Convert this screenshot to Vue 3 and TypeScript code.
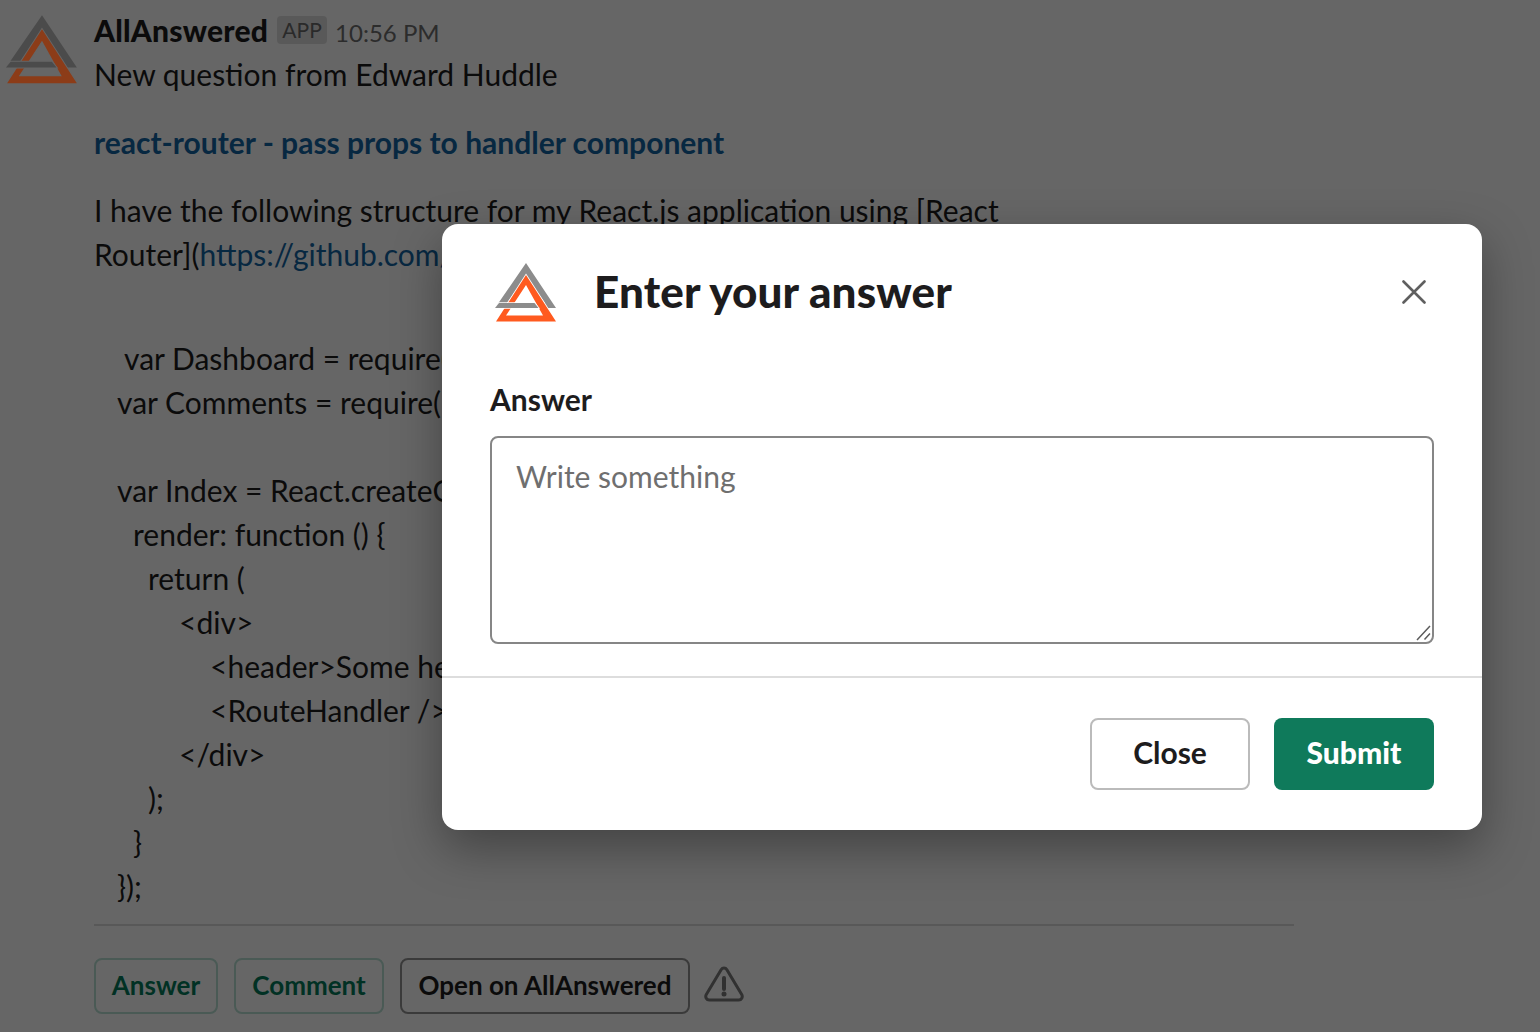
<script setup lang="ts">
interface CodeLine {
  text: string
  indent: number
}

const codeLines: CodeLine[] = [
  { text: 'var Dashboard = require(', indent: 30 },
  { text: 'var Comments = require(', indent: 23 },
  { text: '', indent: 0 },
  { text: 'var Index = React.createC', indent: 23 },
  { text: 'render: function () {', indent: 39 },
  { text: 'return (', indent: 54 },
  { text: '<div>', indent: 85 },
  { text: '<header>Some he', indent: 116 },
  { text: '<RouteHandler />', indent: 116 },
  { text: '</div>', indent: 85 },
  { text: ');', indent: 54 },
  { text: '}', indent: 39 },
  { text: '});', indent: 23 },
]
</script>

<template>
  <div class="page">
    <div class="message">
      <svg class="avatar" viewBox="0 0 62 60" aria-hidden="true">
        <use href="#aa-logo" />
      </svg>
      <div class="content">
        <div class="meta">
          <span class="name">AllAnswered</span>
          <span class="badge">APP</span>
          <span class="time">10:56 PM</span>
        </div>
        <div class="line">New question from Edward Huddle</div>
        <a class="line title-link">react-router - pass props to handler component</a>
        <div class="line para-first">I have the following structure for my React.js application using [React</div>
        <div class="line">Router](<a class="link">https://github.com/</a></div>
        <div class="code">
          <div
            v-for="(row, i) in codeLines"
            :key="i"
            class="line code-line"
            :style="{ paddingLeft: row.indent + 'px' }"
          >{{ row.text }}</div>
        </div>
        <div class="rule"></div>
        <div class="actions">
          <button class="act act-green act-answer">Answer</button>
          <button class="act act-green act-comment">Comment</button>
          <button class="act act-open">Open on AllAnswered</button>
          <svg class="warn" viewBox="0 0 40 36" aria-hidden="true">
            <path d="M20 2c-1.2 0-2.2.6-2.9 1.7L2.3 28.6C.9 31 2.500 34 5.300 34h29.400c2.800 0 4.400-3 3-5.400L22.900 3.700C22.200 2.600 21.200 2 20 2z" fill="none" stroke="#7a7a7a" stroke-width="3" stroke-linejoin="round" />
            <path d="M20 12v11" stroke="#7a7a7a" stroke-width="4" stroke-linecap="round" />
            <circle cx="20" cy="28" r="2.500" fill="#7a7a7a" />
          </svg>
        </div>
      </div>
    </div>

    <div class="overlay"></div>

    <div class="modal">
      <div class="modal-head">
        <svg class="modal-logo" viewBox="0 0 62 60" aria-hidden="true">
          <defs>
            <g id="aa-logo">
              <path class="logo-gray" fill-rule="evenodd" d="M31 1 61 46H0ZM31 14 12 41H50Z" />
              <path class="logo-orange" fill-rule="evenodd" stroke-width="1.6" paint-order="stroke" d="M31 13 61 59.5H1ZM31 23 11 53.500H48Z" />
              <path class="logo-gray logo-halo" stroke-width="1.6" paint-order="stroke" d="M4 41H39.500L43.500 46H0Z" />
            </g>
          </defs>
          <use href="#aa-logo" />
        </svg>
        <h2 class="modal-title">Enter your answer</h2>
        <svg class="close-x" viewBox="0 0 24 24" aria-hidden="true">
          <path d="M1.500 1.500 22.500 22.500M22.500 1.500 1.500 22.500" stroke="#5f5f5f" stroke-width="2.600" stroke-linecap="round" />
        </svg>
      </div>
      <div class="modal-body">
        <label class="field-label" for="answer">Answer</label>
        <div class="field-wrap">
          <textarea id="answer" class="field" placeholder="Write something"></textarea>
          <svg class="grip" viewBox="0 0 16 16" aria-hidden="true">
            <path d="M1 15 14 1M8.500 14.500 14 8.500" stroke="#5c5c5c" stroke-width="1.500" fill="none" />
          </svg>
        </div>
      </div>
      <div class="modal-foot">
        <button class="btn btn-close">Close</button>
        <button class="btn btn-submit">Submit</button>
      </div>
    </div>
  </div>
</template>

<style>
html,
body {
  margin: 0;
  background: #fff;
}
</style>

<style scoped>
.page {
  position: relative;
  height: 1032px;
  overflow: hidden;
  background: #fff;
  font-family: Lato, 'Liberation Sans', sans-serif;
  font-size: 30px;
  line-height: 44px;
  color: #1d1c1d;
}
.message {
  display: flex;
  gap: 16px;
  padding: 8px 0 0 6px;
}
.avatar {
  --aa-gray: #4b4b4b;
  --aa-orange: #8c3c18;
  --aa-halo: #666666;
  position: relative;
  z-index: 1;
  flex: none;
  width: 72px;
  height: 70px;
  margin-top: 6px;
}
.modal-logo {
  --aa-gray: #8c8c8c;
  --aa-orange: #ff5a1f;
  --aa-halo: #ffffff;
}
.logo-gray {
  fill: var(--aa-gray);
}
.logo-orange {
  fill: var(--aa-orange);
  stroke: var(--aa-halo);
}
.logo-halo {
  stroke: var(--aa-halo);
}
.content {
  width: 1200px;
}
.meta {
  display: flex;
  align-items: center;
  height: 44px;
}
.name {
  font-weight: 900;
  letter-spacing: 0.2px;
}
.badge {
  margin-left: 9px;
  width: 50px;
  height: 28px;
  border-radius: 4px;
  background: #dfdfdf;
  color: #6a6a6a;
  font-size: 21px;
  line-height: 28px;
  font-weight: 400;
  text-align: center;
}
.time {
  margin: 6px 0 0 8px;
  font-size: 24px;
  color: #6e6e6e;
}
.line {
  display: block;
  min-height: 44px;
}
.title-link {
  margin-top: 24px;
  font-weight: 700;
  color: #1264a3;
}
.para-first {
  margin-top: 24px;
}
.link {
  color: #1264a3;
}
.code {
  margin-top: 60px;
}
.code-line {
  white-space: pre;
}
.rule {
  height: 2px;
  margin-top: 16px;
  background: #ddd;
}
.actions {
  display: flex;
  align-items: center;
  gap: 16px;
  margin-top: 32px;
}
.act {
  height: 56px;
  padding: 0 0 2px;
  border-radius: 8px;
  background: #fff;
  font-family: inherit;
  font-size: 26px;
  font-weight: 700;
}
.act-green {
  border: 2px solid #b8e0d4;
  color: #047a5a;
}
.act-answer {
  width: 124px;
}
.act-comment {
  width: 150px;
}
.act-open {
  width: 290px;
  border: 2px solid #929292;
  color: #1d1c1d;
}
.warn {
  width: 40px;
  height: 36px;
  margin: 0 0 4px -2px;
}
.overlay {
  position: absolute;
  inset: 0;
  background: rgba(0, 0, 0, 0.6);
}
.modal {
  position: absolute;
  z-index: 2;
  left: 442px;
  top: 224px;
  width: 1040px;
  height: 606px;
  display: flex;
  flex-direction: column;
  border-radius: 16px;
  background: #fff;
  box-shadow: 0 18px 48px rgba(0, 0, 0, 0.35);
}
.modal-head {
  display: flex;
  align-items: center;
  height: 60px;
  padding: 38px 56px 0 53px;
}
.modal-logo {
  flex: none;
  width: 62px;
  height: 60px;
}
.modal-title {
  flex: 1;
  margin: 0 0 2px 37px;
  font-size: 44px;
  line-height: 58px;
  letter-spacing: 0.12px;
  font-weight: 900;
  color: #1d1c1d;
}
.close-x {
  flex: none;
  width: 24px;
  height: 24px;
}
.modal-body {
  display: flex;
  flex-direction: column;
  padding: 55px 48px 32px;
  border-bottom: 2px solid #dddddd;
}
.field-label {
  font-weight: 700;
  height: 45px;
}
.field-wrap {
  position: relative;
  margin-top: 14px;
}
.field {
  display: block;
  box-sizing: border-box;
  width: 100%;
  height: 208px;
  padding: 16px 24px;
  border: 2px solid #868686;
  border-radius: 8px;
  outline: none;
  font-family: inherit;
  font-size: 30px;
  line-height: 44px;
  color: #1d1c1d;
  resize: none;
}
.field::placeholder {
  color: #6f6f6f;
  opacity: 1;
}
.grip {
  position: absolute;
  right: 2px;
  bottom: 3px;
  width: 16px;
  height: 16px;
  pointer-events: none;
}
.modal-foot {
  display: flex;
  justify-content: flex-end;
  gap: 24px;
  padding: 40px 48px;
}
.btn {
  width: 160px;
  height: 72px;
  padding: 0 0 4px;
  border-radius: 8px;
  font-family: inherit;
  font-size: 30px;
  font-weight: 700;
}
.btn-close {
  border: 2px solid #bbbbbb;
  background: #fff;
  color: #1d1c1d;
}
.btn-submit {
  border: none;
  background: #0f7a5b;
  color: #fff;
  font-weight: 900;
}
</style>
